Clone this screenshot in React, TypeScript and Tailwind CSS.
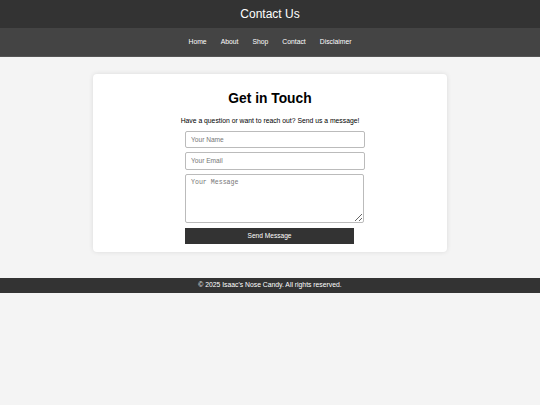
export default function App() {
  const links = ['Home', 'About', 'Shop', 'Contact', 'Disclaimer']

  return (
    <div className="min-h-[405px] bg-[#f4f4f4] font-['Liberation_Sans',Arial,sans-serif] text-[#333]">
      <header className="h-[28px] bg-[#333] flex items-center justify-center">
        <h1 className="text-[12px] text-white">Contact Us</h1>
      </header>
      <nav className="h-[29px] bg-[#444] border-b border-[#555] flex items-center justify-center gap-[14px]">
        {links.map((l) => (
          <a key={l} href="#" className="text-[6.8px] text-white">
            {l}
          </a>
        ))}
      </nav>

      <main className="px-[93px] pt-[17px] pb-[26px]">
        <div className="bg-white rounded-[4px] shadow-[0_0_5px_rgba(0,0,0,0.1)] h-[178px] flex flex-col items-center pt-[18px]">
          <h2 className="text-[13.8px] font-bold text-black leading-none">Get in Touch</h2>
          <p className="text-[6.8px] leading-[10px] text-black mt-[10px]">
            Have a question or want to reach out? Send us a message!
          </p>
          <form className="w-[170px] mt-[5px] flex flex-col gap-[4px]" onSubmit={(e) => e.preventDefault()}>
            <input
              type="text"
              placeholder="Your Name"
              className="w-[180px] h-[17px] border border-[#bbb] rounded-[2px] px-[5px] text-[6.6px] placeholder:text-[#777] outline-none"
            />
            <input
              type="email"
              placeholder="Your Email"
              className="w-[180px] h-[18px] border border-[#bbb] rounded-[2px] px-[5px] text-[6.6px] placeholder:text-[#777] outline-none"
            />
            <textarea
              placeholder="Your Message"
              className="w-[179px] h-[49px] border border-[#bbb] rounded-[2px] px-[5px] py-[3px] text-[6.6px] font-['Liberation_Mono',monospace] placeholder:text-[#777] outline-none"
            />
            <button
              type="submit"
              className="w-[169px] h-[16px] mt-[1px] bg-[#333] text-white text-[6.6px]"
            >
              Send Message
            </button>
          </form>
        </div>
      </main>

      <footer className="h-[15px] bg-[#333] flex items-center justify-center">
        <p className="text-[6.8px] text-white">© 2025 Isaac's Nose Candy. All rights reserved.</p>
      </footer>
    </div>
  )
}
